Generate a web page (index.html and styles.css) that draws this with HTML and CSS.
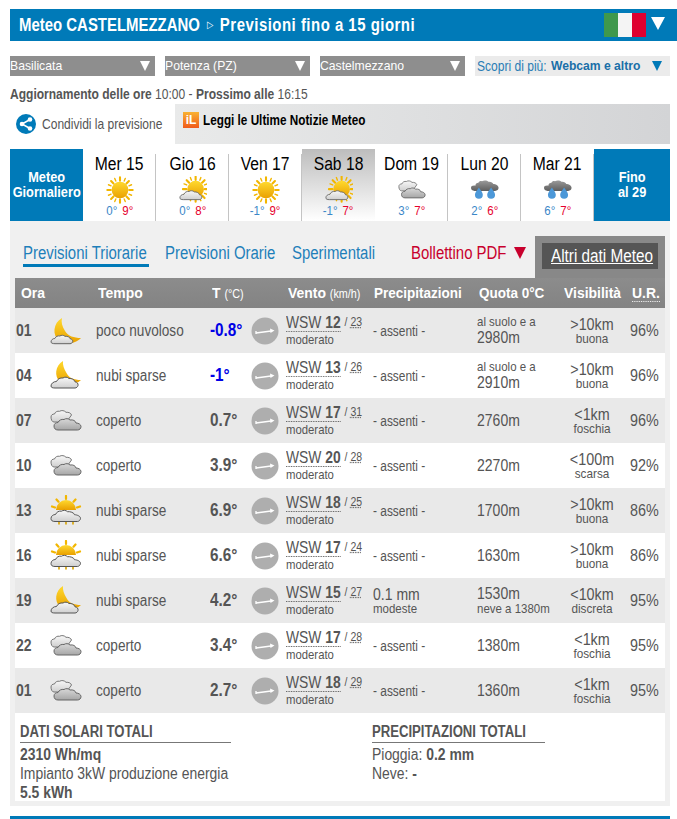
FILE: index.html
```html
<!DOCTYPE html>
<html lang="it">
<head>
    <meta charset="UTF-8">
    <title>Meteo Castelmezzano</title>
    <link rel="stylesheet" href="styles.css">
</head>
<body>
    <!-- Icone meteo -->
    <svg class="defs" width="0" height="0">
        <defs>
            <linearGradient id="gSole" x1="0" y1="0" x2="0" y2="1">
                <stop offset="0" stop-color="#ffd92e"/>
                <stop offset="1" stop-color="#e9a000"/>
            </linearGradient>
            <linearGradient id="gNube" x1="0" y1="0" x2="0" y2="1">
                <stop offset="0" stop-color="#f8f8f8"/>
                <stop offset="1" stop-color="#cfcfcf"/>
            </linearGradient>
            <linearGradient id="gGrigia" x1="0" y1="0" x2="0" y2="1">
                <stop offset="0" stop-color="#d8d8d8"/>
                <stop offset="1" stop-color="#a6a6a6"/>
            </linearGradient>
            <linearGradient id="gScura" x1="0" y1="0" x2="0" y2="1">
                <stop offset="0" stop-color="#9a9a9a"/>
                <stop offset="1" stop-color="#5f5f5f"/>
            </linearGradient>
            <g id="raggi" stroke="#f2b600" stroke-width="2.4" stroke-linecap="round">
                <path d="M16 1.500v4M16 26.500v4M1.500 16h4M26.500 16h4M5.800 5.800l2.800 2.800M23.400 23.400l2.800 2.800M5.800 26.200l2.800-2.800M23.400 8.600l2.800-2.800"/>
                <path d="M10 2.800l1.200 3M20.800 26.200l1.200 3M2.800 22l3-1.200M26.200 11.200l3-1.200M22 2.800l-1.200 3M11.200 26.200l-1.200 3M2.800 10l3 1.200M26.200 20.800l3 1.200" stroke-width="1.600"/>
            </g>
            <symbol id="sole" viewBox="0 0 32 32">
                <use href="#raggi"/>
                <circle cx="16" cy="16" r="9.500" fill="url(#gSole)"/>
            </symbol>
            <symbol id="soleNube" viewBox="0 0 32 32">
                <use href="#raggi" transform="translate(3 -1)"/>
                <circle cx="19" cy="15" r="9.500" fill="url(#gSole)"/>
                <path d="M1 25c0-2.500 2.200-4 4.500-4 1-2.500 3.500-3.800 6-3.300 1.500-1.200 4.500-1.200 6 .5 2.500-.3 5.500 1 6 3.300 2 .2 3 1.800 2.500 3.500-.3 1.200-1.500 2-3 2H5c-2.500 0-4-.5-4-2z" fill="url(#gNube)" stroke="#666" stroke-width="1"/>
            </symbol>
            <symbol id="nubiSparse" viewBox="0 0 32 32">
                <path d="M6 15a10 10 0 0 1 20 0z" fill="url(#gSole)"/>
                <path d="M16 1v3M6.500 4.500l2 2.200M25.500 4.500l-2 2.200M2 11.500l3 1M30 11.500l-3 1" stroke="#f2b600" stroke-width="2.200" stroke-linecap="round"/>
                <path d="M9 27v2M16 27v2M23 27v2" stroke="#d9a400" stroke-width="1.600" stroke-linecap="round"/>
                <path d="M1 23.500c0-2.500 2.200-4 4.500-4 1-2.500 3.500-3.800 6-3.300 1.500-1.200 4.500-1.200 6 .5 2.500-.3 6.500.8 7 3 3 .2 6 1.500 6 3.800 0 1.200-1.500 3-3 3H5c-2.500 0-4-.8-4-3z" fill="url(#gNube)" stroke="#555" stroke-width="1"/>
            </symbol>
            <symbol id="luna" viewBox="0 0 32 32">
                <path d="M12 3C3 8 2 20 9 26c7 5 17 2 22-3-7 0-13-2-16-7-3-5-4-9-3-13z" fill="url(#gSole)"/>
                <path d="M1 27c0-2 1.800-3.500 3.800-3.500 1-2 3-3 5-2.500 1.500-1 3.800-1 5.200.3 2.500-.3 5 1 5.500 2.700 1.500.2 2.500 1.300 2.200 2.700-.3 1-1.300 2-2.700 2H5c-2.500 0-4-.7-4-1.700z" fill="url(#gNube)" stroke="#666" stroke-width="1"/>
            </symbol>
            <symbol id="lunaNube" viewBox="0 0 32 32">
                <path d="M13 1C5 6 4 16 10 22c6 4 16 3 21-2-7 0-12-2-14.500-7C14 9 12.500 5 13 1z" fill="url(#gSole)"/>
                <path d="M1 26c0-2.500 2.500-4.500 5.500-4.500 1-2.500 3.800-4 6.500-3.500 1.500-1.200 4.500-1.200 6 .5 2.500-.3 5.500 1 6 3.300 2 .2 3.500 1.800 3 3.700-.3 1.300-1.500 2.500-3 2.500H5c-2.500 0-4-.5-4-2z" fill="url(#gNube)" stroke="#555" stroke-width="1"/>
            </symbol>
            <symbol id="nube" viewBox="0 0 32 32">
                <path d="M1 12c0-2 1.500-3 3.500-3 .5-2 3-3.300 5-2.700 2-1.300 5-.8 6.500 1 2.500-.3 5 .8 5.500 2.700l-5 7H4c-2 0-3-2.500-3-5z" fill="url(#gNube)" stroke="#777" stroke-width="1"/>
                <path d="M4 21c0-2.300 2-3.500 4-3.500 1-2.300 3.500-3.500 6-3 1.500-1.200 4.500-1.200 6 .5 3-.5 5.500.7 6 3 2.500 0 5 1.500 5 3.500 0 2-1.500 3.500-3.500 3.500H8c-2.500 0-4-1.500-4-4z" fill="url(#gGrigia)" stroke="#666" stroke-width="1"/>
            </symbol>
            <symbol id="pioggia" viewBox="0 0 32 32">
                <path d="M5 11c0-2 1.500-3.300 3.500-3.300.5-1.500 2.500-2.200 4-1.700 2-1.500 6-1.300 7.500.7 2.500-.5 5 .8 5.500 2.500 2.500 0 6 1.800 6 4.300 0 2-1.500 3.500-4 3.500H4c-2.500 0-4-1.500-4-3.500 0-2 2-3 5-2.500z" fill="url(#gScura)"/>
                <path d="M9 13c2.500 3.500 4.500 6 4.500 8.500a4.500 4.500 0 0 1-9 0C4.500 19 6.500 16.500 9 13zM23 13c2.500 3.500 4.500 6 4.500 8.500a4.500 4.500 0 0 1-9 0c0-2.500 2-5 4.500-8.500z" fill="#4c98d8"/>
            </symbol>
            <symbol id="vento" viewBox="0 0 28 28">
                <circle cx="14" cy="14" r="13.500" fill="#aeaeae"/>
                <path d="M5 16l15-2" stroke="#fff" stroke-width="1.300"/>
                <path d="M19 11.500l4.500 2-4 2.500z" fill="#fff"/>
                <path d="M5 14v3" stroke="#fff" stroke-width="1.300"/>
            </symbol>
        </defs>
    </svg>

    <div class="pagina">
        <div class="testata">
            <div class="titolo">Meteo CASTELMEZZANO<span class="freccina">&#9655;</span><span class="sottotitolo">Previsioni fino a 15 giorni</span></div>
            <div class="bandiera"><i class="verde"></i><i class="bianco"></i><i class="rosso"></i></div>
            <div class="tri-testata"></div>
        </div>

        <div class="selettori">
            <div class="sel">Basilicata<span class="tri"></span></div>
            <div class="sel">Potenza (PZ)<span class="tri"></span></div>
            <div class="sel">Castelmezzano<span class="tri"></span></div>
            <div class="sel sel-chiaro"><span class="scopri">Scopri di più:</span><b>Webcam e altro</b><span class="tri tri-blu"></span></div>
        </div>

        <div class="aggiornamento"><b>Aggiornamento delle ore</b> 10:00 - <b>Prossimo alle</b> 16:15</div>

        <div class="riga-share">
            <div class="share">
                <svg class="ico-share" viewBox="0 0 20 20" width="20" height="20">
                    <circle cx="10" cy="10" r="10" fill="#007ab8"/>
                    <path d="M14 5.500L6 10l8 4.500" fill="none" stroke="#fff" stroke-width="1.500"/>
                    <circle cx="14" cy="5.500" r="2.300" fill="#fff"/>
                    <circle cx="6" cy="10" r="2.300" fill="#fff"/>
                    <circle cx="14" cy="14.500" r="2.300" fill="#fff"/>
                </svg>
                <span class="share-testo">Condividi la previsione</span>
            </div>
            <div class="notizie">
                <span class="logo-il">iL</span>
                <b class="notizie-testo">Leggi le Ultime Notizie Meteo</b>
            </div>
        </div>

        <div class="giorni">
            <div class="box-blu"><span>Meteo<br>Giornaliero</span></div>
            <div class="giorno">
                <div class="nome">Mer 15</div>
                <svg class="ico-giorno"><use href="#sole"/></svg>
                <div class="minmax"><span class="min">0°</span> <span class="max">9°</span></div>
            </div>
            <div class="giorno">
                <div class="nome">Gio 16</div>
                <svg class="ico-giorno"><use href="#soleNube"/></svg>
                <div class="minmax"><span class="min">0°</span> <span class="max">8°</span></div>
            </div>
            <div class="giorno">
                <div class="nome">Ven 17</div>
                <svg class="ico-giorno"><use href="#sole"/></svg>
                <div class="minmax"><span class="min">-1°</span> <span class="max">9°</span></div>
            </div>
            <div class="giorno attivo">
                <div class="nome">Sab 18</div>
                <svg class="ico-giorno"><use href="#soleNube"/></svg>
                <div class="minmax"><span class="min">-1°</span> <span class="max">7°</span></div>
            </div>
            <div class="giorno">
                <div class="nome">Dom 19</div>
                <svg class="ico-giorno"><use href="#nube"/></svg>
                <div class="minmax"><span class="min">3°</span> <span class="max">7°</span></div>
            </div>
            <div class="giorno">
                <div class="nome">Lun 20</div>
                <svg class="ico-giorno"><use href="#pioggia"/></svg>
                <div class="minmax"><span class="min">2°</span> <span class="max">6°</span></div>
            </div>
            <div class="giorno">
                <div class="nome">Mar 21</div>
                <svg class="ico-giorno"><use href="#pioggia"/></svg>
                <div class="minmax"><span class="min">6°</span> <span class="max">7°</span></div>
            </div>
            <div class="box-blu box-fino"><span>Fino<br>al 29</span></div>
        </div>

        <div class="pannello">
            <div class="schede">
                <div class="scheda attiva"><span>Previsioni Triorarie</span></div>
                <div class="scheda s-orarie"><span>Previsioni Orarie</span></div>
                <div class="scheda s-sper"><span>Sperimentali</span></div>
                <div class="bollettino"><span>Bollettino PDF</span><i class="tri tri-rosso"></i></div>
                <div class="altri"><div class="altri-int"><span>Altri dati Meteo</span></div></div>
            </div>

            <div class="intesta griglia">
                <div class="i-ora">Ora</div>
                <div class="span-tempo">Tempo</div>
                <div class="i-t">T <small>(°C)</small></div>
                <div class="span-vento">Vento <small>(km/h)</small></div>
                <div class="i-p">Precipitazioni</div>
                <div class="i-q">Quota 0°C</div>
                <div class="i-v">Visibilità</div>
                <div class="ur"><span>U.R.</span></div>
            </div>

            <div class="griglia riga">
                <div class="ora">01</div>
                <svg class="ico-riga"><use href="#luna"/></svg>
                <div class="desc">poco nuvoloso</div>
                <div class="temp gelo">-0.8°</div>
                <svg class="ico-vento"><use href="#vento"/></svg>
                <div class="vento"><div><span class="dir">WSW <b>12</b></span> <small>/ <u>23</u></small></div><div class="sotto">moderato</div></div>
                <div class="prec">- assenti -</div>
                <div class="quota"><div class="sotto">al suolo e a</div><div>2980m</div></div>
                <div class="vis"><div>&gt;10km</div><div class="sotto">buona</div></div>
                <div class="um">96%</div>
            </div>
            <div class="griglia riga">
                <div class="ora">04</div>
                <svg class="ico-riga"><use href="#lunaNube"/></svg>
                <div class="desc">nubi sparse</div>
                <div class="temp gelo">-1°</div>
                <svg class="ico-vento"><use href="#vento"/></svg>
                <div class="vento"><div><span class="dir">WSW <b>13</b></span> <small>/ <u>26</u></small></div><div class="sotto">moderato</div></div>
                <div class="prec">- assenti -</div>
                <div class="quota"><div class="sotto">al suolo e a</div><div>2910m</div></div>
                <div class="vis"><div>&gt;10km</div><div class="sotto">buona</div></div>
                <div class="um">96%</div>
            </div>
            <div class="griglia riga">
                <div class="ora">07</div>
                <svg class="ico-riga"><use href="#nube"/></svg>
                <div class="desc">coperto</div>
                <div class="temp">0.7°</div>
                <svg class="ico-vento"><use href="#vento"/></svg>
                <div class="vento"><div><span class="dir">WSW <b>17</b></span> <small>/ <u>31</u></small></div><div class="sotto">moderato</div></div>
                <div class="prec">- assenti -</div>
                <div class="quota"><div>2760m</div></div>
                <div class="vis"><div>&lt;1km</div><div class="sotto">foschia</div></div>
                <div class="um">96%</div>
            </div>
            <div class="griglia riga">
                <div class="ora">10</div>
                <svg class="ico-riga"><use href="#nube"/></svg>
                <div class="desc">coperto</div>
                <div class="temp">3.9°</div>
                <svg class="ico-vento"><use href="#vento"/></svg>
                <div class="vento"><div><span class="dir">WSW <b>20</b></span> <small>/ <u>28</u></small></div><div class="sotto">moderato</div></div>
                <div class="prec">- assenti -</div>
                <div class="quota"><div>2270m</div></div>
                <div class="vis"><div>&lt;100m</div><div class="sotto">scarsa</div></div>
                <div class="um">92%</div>
            </div>
            <div class="griglia riga">
                <div class="ora">13</div>
                <svg class="ico-riga"><use href="#nubiSparse"/></svg>
                <div class="desc">nubi sparse</div>
                <div class="temp">6.9°</div>
                <svg class="ico-vento"><use href="#vento"/></svg>
                <div class="vento"><div><span class="dir">WSW <b>18</b></span> <small>/ <u>25</u></small></div><div class="sotto">moderato</div></div>
                <div class="prec">- assenti -</div>
                <div class="quota"><div>1700m</div></div>
                <div class="vis"><div>&gt;10km</div><div class="sotto">buona</div></div>
                <div class="um">86%</div>
            </div>
            <div class="griglia riga">
                <div class="ora">16</div>
                <svg class="ico-riga"><use href="#nubiSparse"/></svg>
                <div class="desc">nubi sparse</div>
                <div class="temp">6.6°</div>
                <svg class="ico-vento"><use href="#vento"/></svg>
                <div class="vento"><div><span class="dir">WSW <b>17</b></span> <small>/ <u>24</u></small></div><div class="sotto">moderato</div></div>
                <div class="prec">- assenti -</div>
                <div class="quota"><div>1630m</div></div>
                <div class="vis"><div>&gt;10km</div><div class="sotto">buona</div></div>
                <div class="um">86%</div>
            </div>
            <div class="griglia riga">
                <div class="ora">19</div>
                <svg class="ico-riga"><use href="#lunaNube"/></svg>
                <div class="desc">nubi sparse</div>
                <div class="temp">4.2°</div>
                <svg class="ico-vento"><use href="#vento"/></svg>
                <div class="vento"><div><span class="dir">WSW <b>15</b></span> <small>/ <u>27</u></small></div><div class="sotto">moderato</div></div>
                <div class="prec prec-dati"><div>0.1 mm</div><div class="sotto">modeste</div></div>
                <div class="quota"><div>1530m</div><div class="sotto">neve a 1380m</div></div>
                <div class="vis"><div>&lt;10km</div><div class="sotto">discreta</div></div>
                <div class="um">95%</div>
            </div>
            <div class="griglia riga">
                <div class="ora">22</div>
                <svg class="ico-riga"><use href="#nube"/></svg>
                <div class="desc">coperto</div>
                <div class="temp">3.4°</div>
                <svg class="ico-vento"><use href="#vento"/></svg>
                <div class="vento"><div><span class="dir">WSW <b>17</b></span> <small>/ <u>28</u></small></div><div class="sotto">moderato</div></div>
                <div class="prec">- assenti -</div>
                <div class="quota"><div>1380m</div></div>
                <div class="vis"><div>&lt;1km</div><div class="sotto">foschia</div></div>
                <div class="um">95%</div>
            </div>
            <div class="griglia riga">
                <div class="ora">01</div>
                <svg class="ico-riga"><use href="#nube"/></svg>
                <div class="desc">coperto</div>
                <div class="temp">2.7°</div>
                <svg class="ico-vento"><use href="#vento"/></svg>
                <div class="vento"><div><span class="dir">WSW <b>18</b></span> <small>/ <u>29</u></small></div><div class="sotto">moderato</div></div>
                <div class="prec">- assenti -</div>
                <div class="quota"><div>1360m</div></div>
                <div class="vis"><div>&lt;1km</div><div class="sotto">foschia</div></div>
                <div class="um">95%</div>
            </div>

            <div class="totali">
                <div class="tot-solari">
                    <div class="tot-titolo"><span>DATI SOLARI TOTALI</span></div>
                    <div class="tot-riga"><b>2310 Wh/mq</b></div>
                    <div class="tot-riga">Impianto 3kW produzione energia</div>
                    <div class="tot-riga"><b>5.5 kWh</b></div>
                </div>
                <div class="tot-prec">
                    <div class="tot-titolo"><span>PRECIPITAZIONI TOTALI</span></div>
                    <div class="tot-riga">Pioggia: <b>0.2 mm</b></div>
                    <div class="tot-riga">Neve: <b>-</b></div>
                </div>
            </div>
        </div>

        <div class="piede"></div>
    </div>
</body>
</html>
```

FILE: styles.css
```css
body {
    margin: 0;
    background: #fff;
    font-family: "Liberation Sans", Arial, sans-serif;
    color: #555;
    white-space: nowrap;
}

.defs {
    position: absolute;
}

.pagina {
    width: 660px;
    margin-left: 10px;
    padding-top: 9px;
}

/* Niente font stretto installato: il testo si stringe con scaleX */
.titolo, .scopri, .sel-chiaro b, .aggiornamento, .share-testo, .notizie-testo,
.scheda span, .bollettino span, .intesta > div, .ora, .desc, .temp, .vento,
.prec, .quota, .um, .tot-titolo span, .tot-riga {
    display: inline-block;
    transform-origin: 0 50%;
}

/* Testata blu */
.testata {
    display: flex;
    align-items: center;
    width: 667px;
    height: 32px;
    background: #007ab8;
    color: #fff;
}

.titolo {
    flex: 1;
    margin-left: 9px;
    font-size: 18px;
    font-weight: bold;
    transform: scaleX(.83);
}

.sottotitolo {
    letter-spacing: .6px;
}

.freccina {
    font-size: 10px;
    font-weight: normal;
    vertical-align: 3px;
    margin: 0 8px;
}

.bandiera {
    display: flex;
    width: 42px;
    height: 24px;
    margin-right: 5px;
}

.bandiera i {
    flex: 1;
}

.verde { background: #3f984c; }
.bianco { background: #f4f4f4; }
.rosso { background: #de0030; }

.tri-testata {
    width: 0;
    height: 0;
    margin: 0 12px 4px 0;
    border-left: 7px solid transparent;
    border-right: 7px solid transparent;
    border-top: 13px solid #fff;
}

/* Selettori */
.selettori {
    display: flex;
    gap: 10px;
    margin-top: 15px;
}

.sel {
    display: flex;
    justify-content: space-between;
    align-items: center;
    width: 145px;
    height: 20px;
    background: #8e8e8e;
    color: #fff;
    font-size: 12.2px;
    padding-right: 5px;
    box-sizing: border-box;
}

.sel-chiaro {
    width: 195px;
    padding: 0 5px 0 2px;
    justify-content: flex-start;
    background: #ebebeb;
    color: #2a7db5;
}

.scopri {
    width: 74px;
    font-size: 14px;
    transform: scaleX(.86);
}

.sel-chiaro b {
    width: 101px;
    font-size: 12.5px;
    color: #1a6fa8;
    transform: scaleX(.97);
}

.tri {
    display: inline-block;
    width: 0;
    height: 0;
    border-left: 5.5px solid transparent;
    border-right: 5.5px solid transparent;
    border-top: 10px solid #fff;
}

.tri-blu {
    border-top-color: #007ab8;
}

.tri-rosso {
    border-left-width: 6.5px;
    border-right-width: 6.5px;
    border-top: 12px solid #c8002d;
}

.aggiornamento {
    display: block;
    margin-top: 10px;
    font-size: 14.5px;
    line-height: 17px;
    height: 18px;
    transform: scaleX(.83);
}

/* Condividi + notizie */
.riga-share {
    display: flex;
    height: 40px;
}

.share {
    display: flex;
    align-items: center;
    gap: 6px;
    width: 165px;
    padding-left: 6px;
    box-sizing: border-box;
    font-size: 14.5px;
}

.ico-share {
    flex: none;
}

.share-testo {
    flex: none;
    transform: scaleX(.83);
}

.notizie {
    flex: 1;
    display: flex;
    align-items: center;
    gap: 4px;
    padding: 0 8px 8px;
    background: linear-gradient(to right, #e9eaea, #d3d4d6);
    color: #000;
    font-size: 14.5px;
}

.notizie-testo {
    transform: scaleX(.81);
}

.logo-il {
    width: 16px;
    height: 16px;
    background: linear-gradient(#f9b233, #f05a1a);
    color: #fff;
    font-weight: bold;
    font-size: 12px;
    line-height: 16px;
    text-align: center;
}

/* Striscia giorni */
.giorni {
    display: grid;
    grid-template-columns: repeat(8, 73px) 76px;
    height: 72px;
    margin-top: 5px;
}

.box-blu {
    display: flex;
    align-items: center;
    justify-content: center;
    text-align: center;
    background: #007ab8;
    color: #fff;
    font-weight: bold;
    font-size: 14.5px;
    line-height: 15px;
}

.box-blu span {
    display: inline-block;
    transform: scaleX(.88);
}

.giorno {
    display: flex;
    flex-direction: column;
    align-items: center;
    text-align: center;
    background: linear-gradient(#c4c4c4, #c4c4c4) right 5px / 1px 100% no-repeat;
}

.giorno .nome {
    margin-top: 5px;
    font-size: 18px;
    line-height: 20px;
    color: #000;
    transform: scaleX(.87);
}

.giorno.attivo {
    background: linear-gradient(to bottom, #bdbdbd, #fff);
}

.ico-giorno {
    width: 28px;
    height: 28px;
    margin-top: 2px;
}

.minmax {
    font-size: 13.5px;
    line-height: 14px;
    transform: scaleX(.85);
}

.min { color: #3b87c8; }
.max { color: #e6002d; margin-left: 2px; }

/* Pannello grigio */
.pannello {
    background: #f0f0f0;
    padding: 15px 5px 5px;
}

.schede {
    display: flex;
    align-items: flex-start;
    height: 42px;
    font-size: 18px;
}

.scheda {
    width: 126px;
    height: 22px;
    margin: 6px 0 0 8px;
    line-height: 22px;
    color: #1e7fba;
}

.scheda span {
    transform: scaleX(.83);
}

.scheda.attiva {
    border-bottom: 3px solid #007ab8;
    width: 126px;
}

.s-orarie {
    width: 111px;
    margin-left: 16px;
}

.s-sper {
    width: 86px;
    margin-left: 16px;
}

.bollettino {
    display: flex;
    align-items: center;
    gap: 6px;
    width: 116px;
    margin: 6px 8px 0 33px;
    line-height: 22px;
    color: #c8002d;
}

.bollettino span {
    width: 97px;
    transform: scaleX(.83);
}

.altri {
    width: 130px;
    height: 42px;
    margin-left: auto;
    background: #888;
    padding: 7px;
    box-sizing: border-box;
}

.altri-int {
    background: #555;
    color: #fff;
    text-align: center;
    line-height: 26px;
    font-size: 18px;
}

.altri-int span {
    display: inline-block;
    text-decoration: underline;
    transform: scaleX(.85);
}

/* Griglia tabella */
.griglia {
    display: grid;
    grid-template-columns: 35px 46px 114px 41px 35px 87px 104px 85px 60px 43px;
    align-items: center;
}

.intesta {
    height: 30px;
    background: linear-gradient(#8c8c8c, #838383);
    color: #fff;
    font-weight: bold;
    font-size: 15.5px;
    box-sizing: border-box;
}

.intesta > div {
    transform: scaleX(.9);
}

.intesta > .i-p, .intesta > .i-q {
    transform: scaleX(.87);
}

.intesta small {
    font-size: 12px;
    font-weight: normal;
}

.i-ora { margin-left: 6px; }
.span-tempo { grid-column: span 2; margin-left: 48px; }
.i-t { margin-left: 2px; }
.span-vento { grid-column: span 2; margin-left: 37px; }
.i-p { margin-left: 1px; }
.i-q { margin-left: 2px; }
.i-v { margin-left: 2px; }
.ur { margin-left: 10px; }
.ur span { border-bottom: 1px dotted #fff; }

.riga {
    height: 45px;
    font-size: 16px;
}

.riga:nth-of-type(odd) {
    background: #e9e9e9;
}

.riga:nth-of-type(even) {
    background: #fff;
}

.ora {
    margin-left: 1px;
    font-weight: bold;
    font-size: 16.5px;
    transform: scaleX(.85);
}

.ico-riga {
    width: 32px;
    height: 32px;
}

.desc {
    transform: scaleX(.85);
}

.temp {
    font-size: 18px;
    font-weight: bold;
    transform: scaleX(.85);
}

.gelo {
    color: #0000e6;
}

.ico-vento {
    width: 28px;
    height: 28px;
}

.vento {
    line-height: 15px;
    font-size: 16.5px;
    transform: scaleX(.84);
}

.dir {
    border-bottom: 1px dotted #555;
}

.vento small {
    font-size: 12.5px;
    vertical-align: 2px;
}

.vento u {
    text-decoration-style: dotted;
}

.sotto {
    font-size: 13.5px;
    line-height: 14px;
}

.vento .sotto {
    margin-top: 3px;
}

.prec {
    font-size: 14px;
    transform: scaleX(.85);
}

.prec-dati {
    font-size: 16.5px;
    line-height: 16px;
}

.quota {
    font-size: 16.5px;
    line-height: 17px;
    transform: scaleX(.85);
}

.vis {
    text-align: center;
    font-size: 16.5px;
    line-height: 16px;
    transform: scaleX(.87);
}

.um {
    margin-left: 8px;
    font-size: 16.5px;
    transform: scaleX(.87);
}

/* Totali */
.totali {
    display: flex;
    background: #fff;
    height: 88px;
    padding: 9px 5px 0;
    font-size: 16px;
    line-height: 19px;
    box-sizing: border-box;
}

.tot-riga {
    display: block;
    transform: scaleX(.87);
}

.tot-solari {
    width: 352px;
}

.tot-titolo {
    font-size: 16px;
    font-weight: bold;
    line-height: 20px;
    margin-bottom: 2px;
    border-bottom: 1px solid #777;
}

.tot-titolo span {
    transform: scaleX(.82);
}

.tot-solari .tot-titolo { width: 211px; }
.tot-prec .tot-titolo { width: 173px; }

.piede {
    height: 3px;
    margin-top: 10px;
    background: #007ab8;
}
```
